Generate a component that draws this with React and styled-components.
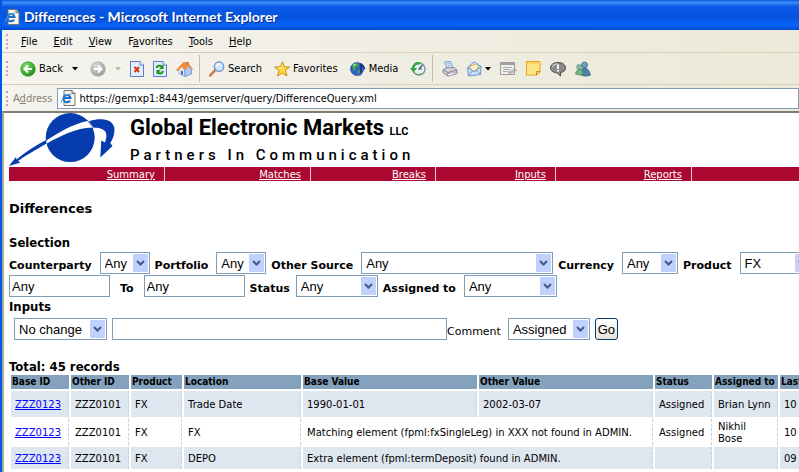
import React from "react";
import styled, { createGlobalStyle } from "styled-components";

const GlobalStyle = createGlobalStyle`
  * {
    box-sizing: border-box;
  }
  body {
    margin: 0;
    background: #fff;
    color: #000;
    font-family: "DejaVu Sans", Verdana, sans-serif;
    overflow: hidden;
  }
`;

const filtersOne = [
  { label: "Counterparty", value: "Any", width: 50 },
  { label: "Portfolio", value: "Any", width: 50 },
  { label: "Other Source", value: "Any", width: 192 },
  { label: "Currency", value: "Any", width: 56 },
  { label: "Product", value: "FX", width: 72 },
];

const navLinks = [
  { name: "Summary", width: 156 },
  { name: "Matches", width: 146 },
  { name: "Breaks", width: 125 },
  { name: "Inputs", width: 120 },
  { name: "Reports", width: 136 },
];

const columns = [
  { name: "Base ID", width: 58 },
  { name: "Other ID", width: 58 },
  { name: "Product", width: 51 },
  { name: "Location", width: 117 },
  { name: "Base Value", width: 174 },
  { name: "Other Value", width: 174 },
  { name: "Status", width: 57 },
  { name: "Assigned to", width: 64 },
  { name: "Last Update", width: 80 },
];

const rows = [
  {
    location: "Trade Date",
    base: "1990-01-01",
    other: "2002-03-07",
    status: "Assigned",
    assigned: "Brian Lynn",
    last: "10",
  },
  {
    location: "FX",
    message: "Matching element (fpml:fxSingleLeg) in XXX not found in ADMIN.",
    status: "Assigned",
    assigned: "Nikhil Bose",
    last: "10",
  },
  {
    location: "DEPO",
    message: "Extra element (fpml:termDeposit) found in ADMIN.",
    last: "09",
  },
];

const PageIcon = () => (
  <svg width="16" height="16" viewBox="0 0 16 16">
    <path d="M4 .5h8l3 3v12H4z" fill="#f8f6ea" stroke="#77746a" />
    <path d="M12 .5v3h3" fill="#ccc" stroke="#77746a" />
    <path
      d="M10 10.6a3.6 3.6 0 1 1 .5-2.6H4"
      fill="none"
      stroke="#1670cc"
      strokeWidth="2"
    />
    <path d="M1 13C2 8 7 3.500 11.500 4" fill="none" stroke="#48a5e8" />
  </svg>
);

const ArrowIcon = ({ forward }) => (
  <svg width="16" height="16" viewBox="0 0 16 16">
    <defs>
      <radialGradient id={forward ? "fwd" : "back"} cx=".35" cy=".3" r=".8">
        <stop offset="0" stopColor={forward ? "#dcdcdc" : "#8ade6c"} />
        <stop offset="1" stopColor={forward ? "#969696" : "#188a14"} />
      </radialGradient>
    </defs>
    <circle
      cx="8"
      cy="8"
      r="7.300"
      fill={forward ? "url(#fwd)" : "url(#back)"}
      stroke={forward ? "#a8a8a8" : "#2c9426"}
      strokeWidth=".6"
    />
    <path
      d={forward ? "M4 8h7M8 4.500 11.500 8 8 11.500" : "M12 8H5M8 4.500 4.500 8 8 11.500"}
      fill="none"
      stroke="#fff"
      strokeWidth="2"
    />
  </svg>
);

const DownIcon = ({ faded }) => (
  <svg width="6" height="4" viewBox="0 0 6 4">
    <path d="M0 0h6L3 3.500z" fill={faded ? "#b9b6a6" : "#000"} />
  </svg>
);

const StopIcon = () => (
  <svg width="14" height="16" viewBox="0 0 14 16">
    <path d="M.5.5h9.500l3.500 3.500v11.500H.5z" fill="#e4edfd" stroke="#5a7fc8" />
    <path d="M10 .5V4h3.500" fill="#fff" stroke="#5a7fc8" />
    <path d="m4.500 6 4.500 5M9 6l-4.500 5" stroke="#d8360c" strokeWidth="2" />
  </svg>
);

const RefreshIcon = () => (
  <svg width="14" height="16" viewBox="0 0 14 16">
    <path d="M.5.5h9.500l3.500 3.500v11.500H.5z" fill="#e4edfd" stroke="#5a7fc8" />
    <path d="M10 .5V4h3.500" fill="#fff" stroke="#5a7fc8" />
    <path
      d="M3.500 7C4 4.500 7 4 9 5.500M10 10c-.5 3-3.500 3-5.500 1.500"
      fill="none"
      stroke="#189418"
      strokeWidth="2"
    />
    <path d="M10.500 3.500V8H6zM3.500 13.500V9H8z" fill="#189418" />
  </svg>
);

const HomeIcon = () => (
  <svg width="17" height="16" viewBox="0 0 17 16">
    <path d="M10 1h2.500v4H10z" fill="#b84a20" />
    <path d="m3 7.500 3-2.500 3 5v5.500l-6-3z" fill="#e6eefc" stroke="#8095c8" strokeWidth=".7" />
    <path d="m9 9.500 3.500-4.500 3 4.500v3.500L9 15.500z" fill="#b5cbf5" stroke="#6680bc" strokeWidth=".7" />
    <path d="M0 9 7.500 1l5 1 4.500 6.500-1.200.8L12.300 4 8.700 9.500 6 6 1.500 10.300z" fill="#f08a3c" />
    <path d="m5 9.500 2 .7v4l-2-1z" fill="#3c62b4" />
  </svg>
);

const SearchIcon = () => (
  <svg width="16" height="16" viewBox="0 0 16 16">
    <path d="m1.200 14.500 5-5.500" stroke="#d07838" strokeWidth="2.600" strokeLinecap="round" />
    <circle cx="10" cy="5.700" r="4.700" fill="#cfe9ff" stroke="#6d94cc" strokeWidth="1.300" />
    <path d="M7.500 5c.5-2 2-2.500 3.500-2" fill="none" stroke="#fff" strokeWidth="1.500" />
  </svg>
);

const StarIcon = () => (
  <svg width="16" height="16" viewBox="0 0 16 16">
    <path
      d="m8.500.8 1.700 5 5.300.2-4.200 3.500 1.700 5.500-4.700-3-4.800 3 1.600-5.300L.6 6l5.700-.2z"
      fill="#ffd83d"
      stroke="#c98a12"
    />
    <path d="M8.300 3.500 7.200 7 4 7.300" fill="none" stroke="#fff6b0" />
  </svg>
);

const MediaIcon = () => (
  <svg width="16" height="16" viewBox="0 0 16 16">
    <circle cx="7" cy="8" r="6.500" fill="#2860c8" stroke="#1c3c90" strokeWidth=".6" />
    <path d="M2 4.500C4 2 7 1.500 9 3L7.500 6 5 6.500 6 9l-2.500 1zM8 9l3 .5-2 4-2-1z" fill="#45a842" />
    <path d="M3 4.500 6 3" stroke="#cdf2ff" />
    <path d="M11 13V2.500c1 2.500 4 2.500 3.500 6" fill="none" stroke="#1c2c70" strokeWidth="1.500" />
    <ellipse cx="9.800" cy="13" rx="2" ry="1.600" fill="#4b62b8" />
  </svg>
);

const HistoryIcon = () => (
  <svg width="16" height="16" viewBox="0 0 16 16">
    <circle cx="9" cy="8" r="6" fill="#e4f2f4" stroke="#83979e" strokeWidth="1.500" />
    <path d="M12.500 4 9 8h3" fill="none" stroke="#3a6070" strokeWidth="1.200" />
    <path d="M10 2.500C6 1.500 3 4 3 8" fill="none" stroke="#30a838" strokeWidth="2.500" />
    <path d="M0 7h7l-3.500 4.500z" fill="#30a838" />
    <path d="M5 12c2 2 5 2 6.500 0" fill="none" stroke="#30a838" />
  </svg>
);

const PrintIcon = () => (
  <svg width="16" height="16" viewBox="0 0 16 16">
    <path d="m2.500 1 6-.5 3 7-6 1z" fill="#e6f0ff" stroke="#7c9bd0" />
    <path d="m4.500 3 3.500-.4M5.500 5l3.500-.4" stroke="#7ca4ea" />
    <path d="m1 9 3-2 8-.5 3 2.500v3.500l-9 2.500-5-3.500z" fill="#d4d3db" stroke="#83828e" />
    <path d="m1 9 5 2.500L15 9M6 11.500V15" fill="none" stroke="#83828e" />
    <path d="m5 13 7-1.500 2 1L7 15z" fill="#fff" stroke="#92919c" strokeWidth=".6" />
  </svg>
);

const MailIcon = () => (
  <svg width="15" height="16" viewBox="0 0 15 16">
    <path d="M.5 6.500 7 .8l7 4.700-.5 8L1.500 15z" fill="#cce2ff" stroke="#6896d6" />
    <path d="m3 5 7-2 2 5-5 3-4-3z" fill="#fff1c4" stroke="#d2a45a" strokeWidth=".8" />
    <path d="m.8 6.500 6 4 7-5M1.500 15l4-5.200M13.500 13.500 9 9" fill="none" stroke="#6896d6" />
  </svg>
);

const EditIcon = () => (
  <svg width="17" height="16" viewBox="0 0 17 16">
    <path d="M.5 1.500h14v12H.5z" fill="#efefef" stroke="#9a9a9a" />
    <path d="M1 2h13v2H1z" fill="#a2a2a2" />
    <path d="M3 6.500h9M3 8.500h7M3 10.500h5" stroke="#aaa" />
    <path d="m8 11.500 7-3.500 1.500 1.500L10 12.500z" fill="#d2d2d2" stroke="#858585" strokeWidth=".7" />
  </svg>
);

const NoteIcon = () => (
  <svg width="15" height="15" viewBox="0 0 15 15">
    <path d="M.5.5H14v10.500L10.500 14H.5z" fill="#ffe684" stroke="#e8a420" />
    <path d="M1 1h12.500v2H1z" fill="#ffd663" />
    <path d="M14 10.500h-3.500V14z" fill="#fff3bd" stroke="#d78a15" />
  </svg>
);

const DiscussIcon = () => (
  <svg width="16" height="16" viewBox="0 0 16 16">
    <path d="M8 1.500c4.500 0 7.500 2.200 7.500 5s-2 4.700-5 5V15L7 11.800c-4-.2-6.500-2.300-6.500-5 0-3 3-5.300 7.500-5.300z" fill="#8a8a8e" stroke="#4a4a4e" />
    <path d="M2.500 6c.5-2 2.500-3 5-3" fill="none" stroke="#c4c4c8" strokeWidth="1.500" />
    <path d="M8 3.500V8M8 9v1.500" stroke="#fff" strokeWidth="2" />
  </svg>
);

const MessengerIcon = () => (
  <svg width="16" height="16" viewBox="0 0 16 16">
    <circle cx="9.500" cy="4" r="3" fill="#68a4bd" stroke="#365f80" strokeWidth=".7" />
    <path d="M4.500 13C5 9 7 7 9.500 7s5 2.500 6 7c-3 1.500-8 1.500-11-1z" fill="#4d83a8" stroke="#315880" strokeWidth=".7" />
    <circle cx="4" cy="6" r="2.300" fill="#8ac8a0" stroke="#417b60" strokeWidth=".7" />
    <path d="M.5 13C1 10 2.500 8.500 4.500 8.500S8 10 8.500 13c-2 1-6 1-8 0z" fill="#72b68c" stroke="#417b60" strokeWidth=".7" />
  </svg>
);

const GlobeLogo = () => (
  <svg width="107" height="54" viewBox="0 0 107 54">
    <circle cx="61.200" cy="24.600" r="24.500" fill="#063cad" />
    <path d="M36 28.500C50 19 64 11 78.500 8l5 6.500C67 15 52 22.500 37 31z" fill="#fff" />
    <path
      d="M80 8.200C86 6.300 91 6 95 6.500c7 1 10.800 5 10.500 11-.2 5-2 9-4.200 12.500l2.200 3-12.200 11.500 1-17L96 29.500C99 22 98.500 14.500 84.500 14.800z"
      fill="#063cad"
    />
    <path d="M37 27 37.500 30.500C28 36 18 41.500 9 48l2.500 1.500L0 53l7-9 .5 2.500C16 39 26 33 37 27z" fill="#063cad" />
  </svg>
);

const DropDown = ({ id, label, value, width }) => (
  <SelectBox $width={width}>
    <select id={id} aria-label={label} defaultValue={value}>
      <option>{value}</option>
    </select>
    <svg width="15" height="18" viewBox="0 0 15 18">
      <rect width="15" height="18" rx="1" fill="#bfd1fc" />
      <path d="m4 7 3.500 3.500L11 7" fill="none" stroke="#43598c" strokeWidth="2" />
    </svg>
  </SelectBox>
);

const App = () => {
  return (
    <Browser>
      <GlobalStyle />
      <TitleBar>
        <PageIcon />
        <h1>Differences - Microsoft Internet Explorer</h1>
      </TitleBar>
      <MenuBar>
        <Grip />
        <MenuButton><u>F</u>ile</MenuButton>
        <MenuButton><u>E</u>dit</MenuButton>
        <MenuButton><u>V</u>iew</MenuButton>
        <MenuButton>F<u>a</u>vorites</MenuButton>
        <MenuButton><u>T</u>ools</MenuButton>
        <MenuButton><u>H</u>elp</MenuButton>
      </MenuBar>
      <ToolBar>
        <Grip />
        <ToolButton $spaced><ArrowIcon />Back</ToolButton>
        <ToolButton aria-label="Back list"><DownIcon /></ToolButton>
        <ToolButton $spaced aria-label="Forward"><ArrowIcon forward /></ToolButton>
        <ToolButton aria-label="Forward list"><DownIcon faded /></ToolButton>
        <ToolButton aria-label="Stop"><StopIcon /></ToolButton>
        <ToolButton aria-label="Refresh"><RefreshIcon /></ToolButton>
        <ToolButton aria-label="Home"><HomeIcon /></ToolButton>
        <Divider />
        <ToolButton><SearchIcon />Search</ToolButton>
        <ToolButton $spaced><StarIcon />Favorites</ToolButton>
        <ToolButton $spaced><MediaIcon />Media</ToolButton>
        <ToolButton $spaced aria-label="History"><HistoryIcon /></ToolButton>
        <Divider />
        <ToolButton aria-label="Print"><PrintIcon /></ToolButton>
        <ToolButton aria-label="Mail"><MailIcon /><DownIcon /></ToolButton>
        <ToolButton aria-label="Edit"><EditIcon /></ToolButton>
        <ToolButton aria-label="Notes"><NoteIcon /></ToolButton>
        <ToolButton aria-label="Discuss"><DiscussIcon /></ToolButton>
        <ToolButton aria-label="Messenger"><MessengerIcon /></ToolButton>
      </ToolBar>
      <AddressBar>
        <Grip />
        <label htmlFor="address">A<u>d</u>dress</label>
        <AddressField>
          <PageIcon />
          <input
            id="address"
            defaultValue="https://gemxp1:8443/gemserver/query/DifferenceQuery.xml"
          />
        </AddressField>
      </AddressBar>
      <Page>
        <Brand>
          <GlobeLogo />
          <div>
            <BrandName>
              Global Electronic Markets <small>LLC</small>
            </BrandName>
            <Tagline>Partners In Communication</Tagline>
          </div>
        </Brand>
        <Nav>
          {navLinks.map((link) => (
            <NavCell key={link.name} $width={link.width}>
              <a href="#top">{link.name}</a>
            </NavCell>
          ))}
        </Nav>
        <PageTitle>Differences</PageTitle>
        <SectionTitle>Selection</SectionTitle>
        <FormRow>
          {filtersOne.map((item) => (
            <Field key={item.label} $gap={8}>
              <label htmlFor={item.label}>{item.label}</label>
              <DropDown id={item.label} value={item.value} width={item.width} />
            </Field>
          ))}
        </FormRow>
        <FormRow>
          <TextInput $width={101} aria-label="From" defaultValue="Any" />
          <Field $gap={10} $indent>
            <label htmlFor="to">To</label>
            <TextInput id="to" $width={101} defaultValue="Any" />
          </Field>
          <Field $gap={6}>
            <label htmlFor="status">Status</label>
            <DropDown id="status" value="Any" width={82} />
          </Field>
          <Field $gap={8}>
            <label htmlFor="assigned">Assigned to</label>
            <DropDown id="assigned" value="Any" width={93} />
          </Field>
        </FormRow>
        <SectionTitle>Inputs</SectionTitle>
        <InputsRow>
          <DropDown label="Change" value="No change" width={93} />
          <CommentField>
            <TextInput id="comment" $width={335} />
            <label htmlFor="comment">Comment</label>
          </CommentField>
          <DropDown label="New status" value="Assigned" width={82} />
          <GoButton>Go</GoButton>
        </InputsRow>
        <Total>Total: 45 records</Total>
        <Records>
          <colgroup>
            {columns.map((col) => (
              <Col key={col.name} $width={col.width} />
            ))}
          </colgroup>
          <thead>
            <tr>
              {columns.map((col) => (
                <th key={col.name}>{col.name}</th>
              ))}
            </tr>
          </thead>
          <tbody>
            {rows.map((row) => (
              <tr key={row.location}>
                <td><a href="#top">ZZZ0123</a></td>
                <td>ZZZ0101</td>
                <td>FX</td>
                <td>{row.location}</td>
                {row.message ? (
                  <td colSpan="2">{row.message}</td>
                ) : (
                  <>
                    <td>{row.base}</td>
                    <td>{row.other}</td>
                  </>
                )}
                <td>{row.status}</td>
                <td>{row.assigned}</td>
                <td>{row.last}</td>
              </tr>
            ))}
          </tbody>
        </Records>
      </Page>
    </Browser>
  );
};

const Browser = styled.div`
  display: flex;
  flex-direction: column;
  height: 100vh;
  border-left: 2px solid #0058e6;
  background: #ece9d8;
  overflow: hidden;
  font-family: "DejaVu Sans Condensed", Tahoma, sans-serif;
  font-size: 11px;
  svg {
    flex: none;
    display: block;
  }
`;

const TitleBar = styled.header`
  display: flex;
  align-items: center;
  gap: 4px;
  flex: none;
  height: 30px;
  margin-left: -2px;
  padding: 3px 4px 0;
  background: linear-gradient(
    #0a58d8 0%,
    #3c8cf8 8%,
    #0a5ae6 22%,
    #0454e0 60%,
    #0664fa 85%,
    #0248c8 100%
  );
  h1 {
    margin: 0;
    color: #fff;
    font-family: Lato, "Trebuchet MS", sans-serif;
    font-size: 14px;
    font-weight: 700;
    line-height: 18px;
    text-shadow: 1px 1px #0a2c8c;
    white-space: nowrap;
  }
`;

const Bar = styled.div`
  display: flex;
  align-items: center;
  flex: none;
  padding-left: 4px;
  background: linear-gradient(90deg, #f4f3ee, #ece9d8);
  border-bottom: 1px solid #d3cfb8;
`;

const MenuBar = styled(Bar)`
  height: 23px;
`;

const ToolBar = styled(Bar)`
  height: 32px;
`;

const AddressBar = styled(Bar)`
  height: 26px;
  gap: 5px;
  border-bottom: 0;
  label {
    color: #85826f;
  }
`;

const Grip = styled.span`
  flex: none;
  width: 2px;
  height: 15px;
  border-left: 2px dotted #b5b1a0;
`;

const MenuButton = styled.button`
  border: 0;
  padding: 0;
  margin-left: 13px;
  background: transparent;
  font: inherit;
  & + & {
    margin-left: 16px;
  }
`;

const ToolButton = styled.button`
  display: flex;
  align-items: center;
  gap: 3px;
  border: 0;
  padding: 0;
  margin-left: ${(props) => (props.$spaced ? "12px" : "9px")};
  background: transparent;
  font: inherit;
`;

const Divider = styled.span`
  width: 1px;
  height: 27px;
  margin-left: 6px;
  background: #c2bfa8;
`;

const AddressField = styled.div`
  display: flex;
  align-items: center;
  flex: 1;
  gap: 3px;
  height: 21px;
  padding-left: 2px;
  border: 1px solid #7f9db9;
  background: #fff;
  input {
    flex: 1;
    border: 0;
    padding: 0;
    outline: 0;
    background: transparent;
    font: inherit;
  }
`;

const Page = styled.main`
  flex: 1;
  min-height: 0;
  padding-left: 5px;
  border-top: 2px solid #807d70;
  border-left: 2px solid #aca899;
  background: #fff;
  font-family: "DejaVu Sans", Verdana, sans-serif;
  overflow: hidden;
`;

const Brand = styled.div`
  display: flex;
  gap: 14px;
  height: 54px;
`;

const BrandName = styled.div`
  padding-top: 2px;
  font-family: Roboto, "Arial Narrow", sans-serif;
  font-size: 22px;
  font-weight: 700;
  line-height: 26px;
  white-space: nowrap;
  small {
    font-size: 11px;
  }
`;

const Tagline = styled.div`
  font-family: Roboto, "Arial Narrow", sans-serif;
  font-size: 15px;
  font-weight: 500;
  line-height: 20px;
  letter-spacing: 4px;
  white-space: nowrap;
`;

const Nav = styled.nav`
  display: flex;
  height: 14px;
  background: #aa0830;
`;

const NavCell = styled.div`
  flex: none;
  width: ${(props) => props.$width}px;
  padding-right: 9px;
  border-right: 1px solid #e8d0d8;
  font-size: 10px;
  line-height: 16px;
  text-align: right;
  a {
    color: #fff;
  }
`;

const PageTitle = styled.h2`
  margin: 19px 0 16px;
  font-size: 13px;
  line-height: 18px;
`;

const SectionTitle = styled.h3`
  margin: 0;
  font-family: "DejaVu Sans Condensed", Tahoma, sans-serif;
  font-size: 13px;
  line-height: 18px;
`;

const FormRow = styled.div`
  display: flex;
  gap: 5px;
  height: 23px;
`;

const InputsRow = styled(FormRow)`
  margin-top: 2px;
  padding-left: 5px;
`;

const Field = styled.div`
  display: flex;
  flex: none;
  gap: ${(props) => props.$gap}px;
  padding-left: ${(props) => (props.$indent ? "5px" : "0")};
  font-size: 11px;
  font-weight: 700;
  line-height: 28px;
  white-space: nowrap;
`;

const SelectBox = styled.span`
  display: grid;
  flex: none;
  width: ${(props) => props.$width}px;
  height: 22px;
  select {
    grid-area: 1 / 1;
    width: 100%;
    height: 22px;
    appearance: none;
    border: 1px solid #7f9db9;
    border-radius: 0;
    padding: 0 4px;
    background: #fff;
    color: #000;
    font: 13px "Liberation Sans", Arial, sans-serif;
  }
  svg {
    grid-area: 1 / 1;
    justify-self: end;
    align-self: center;
    margin-right: 2px;
    pointer-events: none;
  }
`;

const TextInput = styled.input`
  flex: none;
  width: ${(props) => props.$width}px;
  height: 22px;
  border: 1px solid #7f9db9;
  padding: 0 2px;
  font: 13px "Liberation Sans", Arial, sans-serif;
`;

const CommentField = styled.div`
  display: flex;
  flex: none;
  padding-right: 2px;
  font-size: 11px;
  line-height: 28px;
`;

const GoButton = styled.button`
  width: 23px;
  height: 22px;
  border: 1px solid #003c74;
  border-radius: 3px;
  padding: 0;
  background: linear-gradient(#fff, #e6e3da);
  font: 13px "Liberation Sans", Arial, sans-serif;
`;

const Total = styled(SectionTitle)`
  margin-top: 20px;
  line-height: 12px;
`;

const Records = styled.table`
  table-layout: fixed;
  width: 851px;
  border-spacing: 2px;
  font-size: 10px;
  line-height: 12px;
  th {
    height: 14px;
    padding: 0 1px;
    background: #84a2bd;
    font-family: "DejaVu Sans Condensed", Tahoma, sans-serif;
    text-align: left;
    white-space: nowrap;
  }
  td {
    height: 26px;
    padding: 2px 4px 0;
    border-right: 1px dashed #c5cfe4;
  }
  tr:nth-child(odd) td {
    background: #dee6ef;
  }
  tr:nth-child(3) td {
    height: 22px;
  }
  a {
    color: #00f;
  }
`;

const Col = styled.col`
  width: ${(props) => props.$width}px;
`;

export default App;
